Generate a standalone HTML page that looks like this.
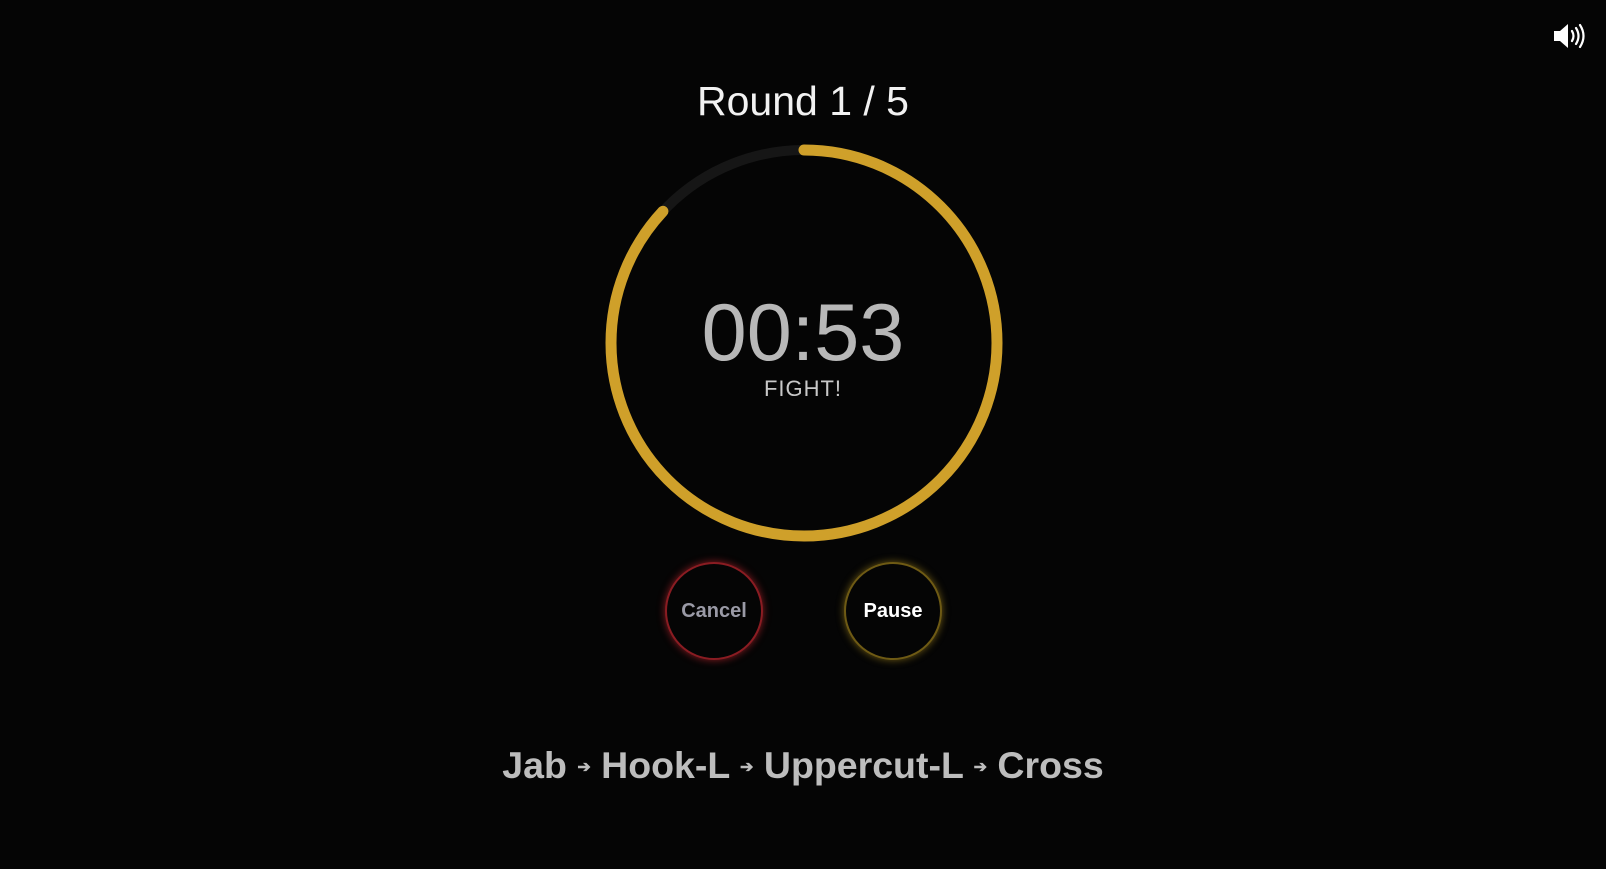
<!DOCTYPE html>
<html><head><meta charset="utf-8"><style>
html,body{margin:0;padding:0;background:#050505;width:1606px;height:869px;overflow:hidden;font-family:"Liberation Sans",Arial,sans-serif}
.t{position:absolute;left:0;width:1606px;text-align:center}
.btn{position:absolute;width:98px;height:98px;border-radius:50%;box-sizing:border-box;display:flex;align-items:center;justify-content:center;font-weight:bold;font-size:20px;background:#050505}
</style></head><body>
<svg style="position:absolute;left:1552px;top:22px" width="34" height="28" viewBox="0 0 34 28">
<path d="M2 9h6l8-7v24l-8-7H2z" fill="#fff"/>
<path d="M20 9q3 5 0 10M24 6q5 8 0 16M28 3q7 11 0 22" stroke="#fff" stroke-width="2.2" fill="none" stroke-linecap="round"/>
</svg>
<div class="t" style="top:78px;font-size:41px;color:#f2f2f2">Round 1 / 5</div>
<svg style="position:absolute;left:0;top:0" width="1606" height="869">
<circle cx="804" cy="343" r="193" fill="none" stroke="#161616" stroke-width="10"/>
<circle cx="804" cy="343" r="193" fill="none" stroke="#cfa02a" stroke-width="11" stroke-linecap="round" stroke-dasharray="1054 2000" transform="rotate(-90 804 343)"/>
</svg>
<div class="t" style="top:287px;font-size:81px;color:#b8b8b8">00:53</div>
<div class="t" style="top:376px;font-size:22px;color:#c8c8c8;letter-spacing:1px">FIGHT!</div>
<div class="btn" style="left:665px;top:562px;border:2px solid #8a1c22;box-shadow:0 0 8px #8a1c22;color:#9a9aa6">Cancel</div>
<div class="btn" style="left:844px;top:562px;border:2px solid #6e5a14;box-shadow:0 0 8px #6e5a14;color:#fff">Pause</div>
<div class="t" style="top:744px;font-size:37.5px;font-weight:bold;color:#bdbdbd">Jab <span style="font-size:16px;vertical-align:6px">➔</span> Hook-L <span style="font-size:16px;vertical-align:6px">➔</span> Uppercut-L <span style="font-size:16px;vertical-align:6px">➔</span> Cross</div>
</body></html>
